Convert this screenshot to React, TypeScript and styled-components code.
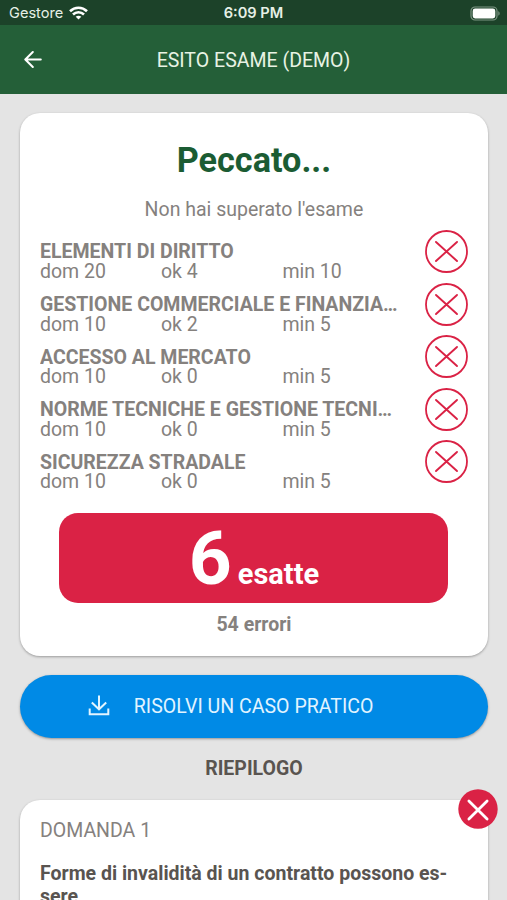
import React from "react";
import styled, { createGlobalStyle } from "styled-components";

const colors = {
  statusBar: "#1c4229",
  header: "#245f38",
  page: "#e4e4e4",
  title: "#1b5c33",
  muted: "#85817e",
  dark: "#595450",
  red: "#da2245",
  blue: "#008ae6",
};

const GlobalStyle = createGlobalStyle`
  *, *::before, *::after { box-sizing: border-box; }
  body {
    margin: 0;
    overflow: hidden;
    background: ${colors.page};
    font-family: Roboto, "Liberation Sans", sans-serif;
  }
`;

const Screen = styled.div`
  display: flex;
  flex-direction: column;
  width: 507px;
  height: 900px;
  overflow: hidden;
  background: ${colors.page};
  color: ${colors.muted};
  font-size: 19.5px;
`;

const StatusBar = styled.div`
  display: grid;
  grid-template-columns: 1fr auto 1fr;
  align-items: center;
  flex: none;
  height: 25px;
  padding: 2px 7px 0 9px;
  background: ${colors.statusBar};
  color: #e6f0e6;
  font-family: Inter, Roboto, sans-serif;
  font-size: 14.6px;
  line-height: 23px;
`;

const Carrier = styled.div`
  display: flex;
  align-items: center;
  gap: 5.5px;

  svg {
    margin-top: -2px;
  }
`;

const Clock = styled.span`
  padding-right: 2px;
  font-size: 14.6px;
  font-weight: 600;
`;

const BatterySlot = styled.div`
  display: flex;
  justify-content: flex-end;
  padding-bottom: 1px;
`;

const Header = styled.header`
  display: grid;
  grid-template-columns: 66px 1fr 66px;
  align-items: center;
  flex: none;
  height: 68.5px;
  background: ${colors.header};
  color: #e8f3e4;
`;

const BackButton = styled.button`
  display: flex;
  justify-content: center;
  padding: 0;
  border: 0;
  background: none;
  color: #fff;
`;

const HeaderTitle = styled.h1`
  margin: 0;
  padding-top: 1.5px;
  font-size: 19.55px;
  font-weight: 400;
  text-align: center;
`;

const Content = styled.main`
  display: flex;
  flex-direction: column;
  padding: 19.5px 19.4px 0 20.3px;
`;

const Card = styled.section`
  flex: none;
  border-radius: 20px;
  background: #fff;
  box-shadow: 0 1px 2.5px rgba(0, 0, 0, 0.32);
`;

const ResultCard = styled(Card)`
  height: 542.6px;
  padding: 27px 19.7px 0;
`;

const ResultTitle = styled.h2`
  margin: 0;
  color: ${colors.title};
  font-size: 34.2px;
  font-weight: 700;
  line-height: 40px;
  text-align: center;
`;

const ResultNote = styled.p`
  margin: 17.5px 0 8.6px;
  line-height: 24px;
  text-align: center;
`;

const SubjectRow = styled.div`
  display: grid;
  grid-template-columns: 361px 43px;
  justify-content: space-between;
  height: 52.6px;
`;

const SubjectText = styled.div`
  padding-top: 12.4px;
  line-height: 20px;
  min-width: 0;
`;

const SubjectName = styled.div`
  overflow: hidden;
  font-size: 19.53px;
  font-weight: 700;
  text-overflow: ellipsis;
  white-space: nowrap;
`;

const SubjectStats = styled.div`
  display: grid;
  grid-template-columns: 121px 121.4px 1fr;
  margin-top: -0.4px;
`;

const ScoreBox = styled.div`
  display: flex;
  align-items: baseline;
  justify-content: center;
  gap: 6px;
  height: 90px;
  margin: 19.8px 19.5px 0;
  border-radius: 19px;
  background: ${colors.red};
  color: #fff;
  font-weight: 700;
`;

const ScoreNumber = styled.span`
  font-size: 75px;
  line-height: 90px;
`;

const ScoreLabel = styled.span`
  font-size: 29px;
`;

const Errors = styled.p`
  margin: 10.6px 0 0;
  font-weight: 700;
  line-height: 24px;
  text-align: center;
`;

const CaseButton = styled.button`
  display: flex;
  flex: none;
  align-items: center;
  gap: 24px;
  height: 63px;
  margin: 19px 0 0;
  padding: 0 0 0 67.5px;
  border: 0;
  border-radius: 32px;
  background: ${colors.blue};
  box-shadow: 0 1px 2.5px rgba(0, 0, 0, 0.35);
  color: #e2f4ff;
  font-family: inherit;
  font-size: 19.55px;

  svg {
    margin-top: -2px;
  }
`;

const SectionTitle = styled.h3`
  margin: 19px 0;
  color: ${colors.dark};
  font-size: 19.5px;
  font-weight: 700;
  line-height: 24px;
  text-align: center;
`;

const QuestionCard = styled(Card)`
  position: relative;
  height: 160px;
  padding: 19.5px 19.7px;
`;

const QuestionBadge = styled.div`
  position: absolute;
  top: -10.6px;
  right: -10px;
  display: flex;
  border-radius: 50%;
`;

const QuestionLabel = styled.div`
  line-height: 24px;
`;

const QuestionText = styled.p`
  margin: 19px 0 0;
  color: ${colors.dark};
  font-size: 19.53px;
  font-weight: 700;
  line-height: 23px;
`;

const WifiIcon = () => (
  <svg width="19" height="14" viewBox="0 0 19 14" fill="none" stroke="#fff" strokeWidth="2.6">
    <path d="M1 5.2C5.8.6 13.2.6 18 5.2" />
    <path d="M4 8.5C7.1 5.5 11.9 5.5 15 8.5" />
    <path d="M9.5 13.6 6.7 10.8C8.3 9.4 10.7 9.4 12.3 10.8Z" fill="#fff" stroke="none" />
  </svg>
);

const BatteryIcon = () => (
  <svg width="30" height="15" viewBox="0 0 30 15">
    <rect x="1" y="1" width="26" height="13" rx="4" fill="none" stroke="#7d9584" strokeWidth="1.2" />
    <rect x="2.7" y="2.6" width="22.6" height="9.8" rx="2.4" fill="#fff" />
    <path d="M28.3 5.3C30.1 6 30.1 9 28.3 9.7Z" fill="#7d9584" />
  </svg>
);

const BackIcon = () => (
  <svg width="18" height="18" viewBox="0 0 18 18" fill="none" stroke="currentColor" strokeWidth="2" strokeLinecap="round" strokeLinejoin="round">
    <path d="M16.8 9.5H1.6M8.8 2 1.3 9.5l7.5 7.5" />
  </svg>
);

const FailedIcon = () => (
  <svg width="43" height="43" viewBox="0 0 43 43" fill="none" stroke={colors.red}>
    <circle cx="21.5" cy="21.5" r="20.5" strokeWidth="1.8" />
    <path d="M11 12 32 31M32 12 11 31" strokeWidth="1.9" strokeLinecap="round" />
  </svg>
);

const DownloadIcon = () => (
  <svg width="22" height="21" viewBox="0 0 22 21" fill="none" stroke="currentColor" strokeWidth="2">
    <path d="M11 .5V14M3.8 7.5 11 14.3 18.2 7.5M1.7 13.5V19.3H20.3V13.5" />
  </svg>
);

const WrongIcon = () => (
  <svg width="40" height="40" viewBox="0 0 40 40">
    <circle cx="20" cy="20" r="19.7" fill={colors.red} />
    <path d="M10.9 12 29.1 30M29.1 12 10.9 30" stroke="#fff" strokeWidth="2.8" strokeLinecap="round" />
  </svg>
);

const subjects = [
  { name: "ELEMENTI DI DIRITTO", total: 20, ok: 4, min: 10 },
  { name: "GESTIONE COMMERCIALE E FINANZIARIA", total: 10, ok: 2, min: 5 },
  { name: "ACCESSO AL MERCATO", total: 10, ok: 0, min: 5 },
  { name: "NORME TECNICHE E GESTIONE TECNICA", total: 10, ok: 0, min: 5 },
  { name: "SICUREZZA STRADALE", total: 10, ok: 0, min: 5 },
];

export default function App() {
  return (
    <Screen>
      <GlobalStyle />
      <StatusBar>
        <Carrier>
          Gestore
          <WifiIcon />
        </Carrier>
        <Clock>6:09 PM</Clock>
        <BatterySlot>
          <BatteryIcon />
        </BatterySlot>
      </StatusBar>
      <Header>
        <BackButton aria-label="Indietro">
          <BackIcon />
        </BackButton>
        <HeaderTitle>ESITO ESAME (DEMO)</HeaderTitle>
      </Header>
      <Content>
        <ResultCard>
          <ResultTitle>Peccato...</ResultTitle>
          <ResultNote>Non hai superato l'esame</ResultNote>
          {subjects.map((s) => (
            <SubjectRow key={s.name}>
              <SubjectText>
                <SubjectName>{s.name}</SubjectName>
                <SubjectStats>
                  <span>dom {s.total}</span>
                  <span>ok {s.ok}</span>
                  <span>min {s.min}</span>
                </SubjectStats>
              </SubjectText>
              <FailedIcon />
            </SubjectRow>
          ))}
          <ScoreBox>
            <ScoreNumber>6</ScoreNumber>
            <ScoreLabel>esatte</ScoreLabel>
          </ScoreBox>
          <Errors>54 errori</Errors>
        </ResultCard>
        <CaseButton>
          <DownloadIcon />
          RISOLVI UN CASO PRATICO
        </CaseButton>
        <SectionTitle>RIEPILOGO</SectionTitle>
        <QuestionCard>
          <QuestionBadge>
            <WrongIcon />
          </QuestionBadge>
          <QuestionLabel>DOMANDA 1</QuestionLabel>
          <QuestionText>
            Forme di invalidità di un contratto possono es-
            <br />
            sere
          </QuestionText>
        </QuestionCard>
      </Content>
    </Screen>
  );
}
